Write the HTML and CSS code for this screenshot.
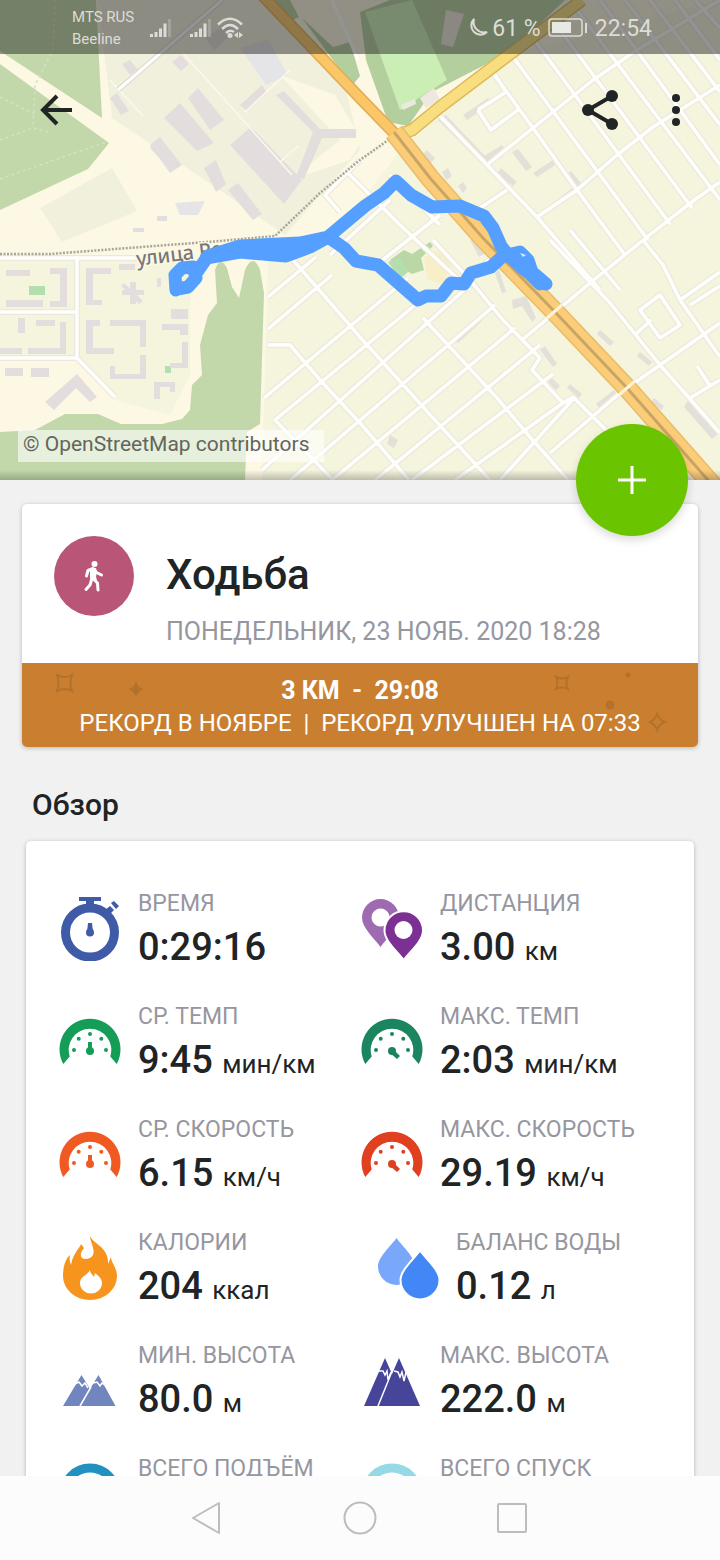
FILE: index.html
```html
<!DOCTYPE html>
<html lang="ru">
<head>
    <meta charset="UTF-8">
    <meta name="viewport" content="width=device-width, initial-scale=1.0">
    <title>Ходьба - Обзор</title>
    <link rel="stylesheet" href="styles.css">
</head>
<body>

    <!-- shared icon shapes -->
    <svg class="symbols" aria-hidden="true">
        <symbol id="gauge" viewBox="0 0 64 64">
            <path d="M5.3 54A30.5 30.5 0 1 1 58.7 54L52.3 46.5A21.3 21.3 0 1 0 11.7 46.5Z"/>
            <circle cx="16" cy="40" r="2"/><circle cx="20.7" cy="28.7" r="2"/><circle cx="32" cy="24" r="2"/>
            <circle cx="43.3" cy="28.7" r="2"/><circle cx="48" cy="40" r="2"/>
        </symbol>
        <symbol id="signal" viewBox="0 0 22 20">
            <path d="M0 16h3v3H0zM4.500 14h3v5h-3zM9 10.500h3V19H9zM13.500 5.500h3V19h-3z"/>
            <path d="M18 1h3v18h-3z" opacity=".3"/>
        </symbol>
    </svg>

    <main class="screen">
        <header class="map">
            <svg class="map-picture" viewBox="0 0 720 480" preserveAspectRatio="xMidYMid slice" role="img" aria-label="Маршрут на карте">
                <rect width="720" height="480" fill="#fdf8e3"/>
                <!-- land use -->
                <path fill="#f0f0dd" d="M98 0H265L345 85 360 150 285 235 205 180 112 118ZM40 208L112 168 137 211 62 242Z"/>
                <path fill="#fdf8e3" d="M280 75l55 20 27 45-12 20-60 20 50-40z"/>
                <path fill="#f5f4dd" d="M0 258H190V375L170 415 115 400 77 360H0ZM405 145L515 55 720 0V480H262L268 260 330 240Z"/>
                <path fill="#c2d8ab" d="M0 0H96L102 118 0 51ZM0 64L109 143 88 169 0 210ZM0 432L35 430 65 414H98L121 424H162L182 419 190 410 192 385 202 375 200 345 208 315 217 303 215 270Q220 255 227 268L232 287 239 298 245 270Q253 252 260 270L264 293 260 424 247 432 245 480H0Z"/>
                <path fill="#b4cf9e" d="M270 0H290L299 17 293 20ZM302 18L333 47 350 42 360 76 352 86ZM390 0H565L510 52 432 92 408 126 388 122 366 60 360 12Z"/>
                <path fill="#cbeeb4" d="M365 12L412 0 447 80 400 110Z"/>
                <path fill="#eee9df" d="M446 10l18 4-11 33-12-3zM401 105l14-6 1 5-13 6zM420 98l14-10 6 12-14 8z"/>
                <path fill="#f8eec8" d="M424 258l14-8 14 14-10 20-14-4z"/>
                <path fill="#bcd7a6" d="M390 260l14-10 8 4 18-12 3 4-12 12 3 12-12 4z"/>
                <path fill="#b2dfad" d="M388 262l12-4 8 14-8 7zM29 286h16v9H29zM165 366h6v7h-6z"/>
                <path fill="none" stroke="#d3e2c0" stroke-width="1.500" stroke-dasharray="3 3" d="M55 0L53 50 35 85 33 128M0 97L34 114M0 140L33 128 52 133M0 179L106 142"/>

                <!-- buildings -->
                <path fill="#e3dedd" d="M164 118l16-15 34 40-17 8zM188 98l10-10 26 32-14 10zM150 145l10-8 22 28-12 8zM230 145l21-18 51 53-18 24zM204 168l12-8 10 24-10 8zM228 190l10-7 24 31-9 6zM276 95l8-4 36 38h36v9h-34l-18 41-8-2 17-45zM240 105l22-20 5 8-20 18zM110 98l7-5 12 18-8 4zM122 64l8-4 8 10-8 5zM172 62l9-7 8 9-8 7zM150 148l6-4 13 15-6 3zM205 38l22-15 8 8-21 19zM157 216h10v5h-10zM133 228h11v4h-11z"/>
                <path fill="#e5e5e7" d="M240 48l28-8 20 35-22 10zM175 203l30-2-7 14h-18z"/>
                <path fill="#e3dedd" d="M6 270h24v6H6zM50 268h17v39H50v-6h10v-27H50zM6 300h37v7H6zM86 268h25v6H93v26h9v5H86zM119 264h16v6h-16zM157 278h4v9h-4zM171 309h17v10h-17zM18 318h7v15h-7zM36 320h19v6H36zM60 322h6v32H28v-6h32zM0 348h22v6H0zM86 320h14v6h-7v22h21v6H86zM110 320h36v27h-6v-21h-30zM110 366h5v8h25v-19h6v24h-36zM162 324h26v11h-8v-5h-18zM182 342h6v26h-18v-5h12zM154 382h21v10h-5v-5h-10v12h-6zM5 368h18v8H5zM31 368h18v9H31zM45 402l32-28 20 23-7 5-14-14-22 22zM122 290h22v5h-22zM130 282h6v22h-6zM124 283l19 18-4 3-18-18z"/>
                <path fill="#e3e0d9" d="M438 120l8-5 40 42-5 6zM484 156l18-11 3 5-18 12zM512 152l6-3 14 18-6 4zM550 205l24-18-8-12 5-4 13 16-31 23zM501 168l16 14-4 4-16-12zM533 173l20-13 2 5-18 12zM421 156l6-6 8 8-6 7zM442 172l6-4 4 8-6 4zM458 186l5-4 4 6-4 5zM463 115l25-17 4 5-25 17zM512 300l14-4 10 22-4 4-10-16-9 3zM540 350l5-4 12 18-4 3zM548 374l12 12-4 4-12-12zM570 384l12 10-3 4-12-10zM596 404l18-14 3 5-17 14zM600 330l14 12-4 4-13-12zM640 352l12 10-3 4-12-10zM688 400l30 34-6 5-28-32zM654 398l10 8-3 4-10-8zM390 435l8 5-4 8-7-4zM454 338l24-22 4 5-24 22zM499 270l7 22-4 1-7-20zM470 240l8-4 6 18-5 3z"/>

                <!-- street grid -->
                <g fill="none" stroke="#ebe9df" stroke-width="6" stroke-linejoin="round">
                    <path id="streets" d="M487 165L533 128 593 80 637 50 720 0M537 217L577 190 617 155 653 127 720 85M522 340L590 283 647 237 697 198 720 182M550 453L620 393 660 365 720 323M438 114L487 165 537 217 600 290M493 73L533 128 577 190 625 255M513 57L648 240M530 34L670 224M551 18L692 208M571 2L720 200M600 0L720 165M625 0L720 125M650 0L720 92M675 0L720 60M695 0L720 28M550 240L610 303 660 365 720 433M643 240L663 265 680 300 720 357M570 230L620 290M640 310L660 295 680 325 660 338ZM636 334L651 320M680 300L720 272M690 305L720 286M697 366L710 386 690 398 720 380M478 110L506 92M478 110L491 130 519 109M506 92L494 73M293 260L360 337 433 418 490 480M268 345H290L320 380 360 423 409 480M275 420L333 480M423 318L460 358 497 398 530 437 568 480M433 240L470 280 503 320 540 358 532 370 563 403 573 397 603 427 640 470M345 170L400 225 470 290M390 175L440 225M268 297L316 257M268 329L332 275M264 398L408 278M275 420L425 297M262 470L470 285M290 480L495 305M332 480L515 328M375 480L540 345M412 480L553 374M455 480L563 403M500 480L575 397M0 312H77M77 256V358L115 397M0 358H77M0 258H140M330 237L375 198M380 262L440 215M462 285L505 245M360 160L325 195 340 212M480 208L507 190M330 255L390 200"/>
                </g>
                <use class="street-fill" href="#streets" fill="none" stroke="#fffefa" stroke-width="3.500"/>
                <path fill="none" stroke="#fbf9ef" stroke-width="1.500" d="M182 52L292 175M245 112L290 70M110 80L143 116M280 162L298 146"/>
                <path fill="none" stroke="#d9d8cd" stroke-width="5" d="M118 90L222 0"/>
                <path fill="none" stroke="#fff" stroke-width="3" d="M118 90L222 0M332 0L358 60"/>
                <!-- railway -->
                <path fill="none" stroke="#a8a69b" stroke-width="2.500" stroke-dasharray="2 1.500" d="M0 254H50L220 241 275 236 320 193 360 160 394 136"/>

                <!-- main roads -->
                <path fill="none" stroke="#dcb95c" stroke-width="13" d="M396 136L412 130 440 107 510 54 582 0"/>
                <path fill="none" stroke="#f8de7f" stroke-width="10" d="M396 136L412 130 440 107 510 54 582 0"/>
                <path fill="none" stroke="#e2ae54" stroke-width="12" d="M262 -5L362 100 397 136"/>
                <path fill="none" stroke="#fac668" stroke-width="9" d="M262 -5L362 100 397 136"/>
                <path fill="none" stroke="#e9bb68" stroke-width="20" d="M394 132L430 178 483 238 555 312 627 388 715 488"/>
                <path fill="none" stroke="#fccd78" stroke-width="17" d="M394 132L430 178 483 238 555 312 627 388 715 488"/>
                <path fill="none" stroke="#c9a565" stroke-width="3" d="M394 132L430 178 483 238 555 312 627 388 715 488"/>
                <path stroke="#fff4d8" stroke-width="3" d="M546 319l16-14M619 395l16-14"/>

                <text class="street-name" transform="translate(137 266) rotate(-7)">улица Ре</text>

                <!-- recorded track -->
                <path class="track" d="M176 290L175 275 182 268 193 267 196 278 188 287 177 289M197 272L208 256 240 246 300 243 328 237 365 206 384 193 396 181 411 195 432 207 460 206 484 216 493 228 501 246 508 255 520 252 528 260 532 272 546 284M206 258L240 252 286 256 310 247 328 237 344 248 356 261 378 265 418 300 426 296 441 296 451 283 464 284 471 273 491 267 506 253 520 266 529 273 540 284"/>
                <path class="track-dot" d="M520 253l6 2-3 2z"/>
            </svg>

            <div class="status-bar">
                <div class="carriers"><span>MTS RUS</span><span>Beeline</span></div>
                <svg class="signal"><use href="#signal"/></svg>
                <svg class="signal signal-second"><use href="#signal"/></svg>
                <svg class="wifi" viewBox="0 0 26 22">
                    <path fill="none" stroke="#dcdcd6" stroke-width="2.500" d="M1 7.500Q13 -4 25 7.500M5 12Q13 4 21 12M9 16Q13 12 17 15"/>
                    <circle cx="13" cy="18.500" r="2.500"/><path d="M17 18l4-3v6zM26 18l-4-3v6z"/>
                </svg>
                <div class="status-right">
                    <svg class="moon" viewBox="0 0 22 22"><path d="M7 2A9 9 0 1 0 20 15 10.500 10.500 0 0 1 7 2Z"/></svg>
                    <span>61 %</span>
                    <svg class="battery" viewBox="0 0 40 20">
                        <rect x="1" y="1" width="33" height="17" rx="3" fill="none" stroke="#dcdcd6" stroke-width="1.500"/>
                        <rect x="4" y="4" width="19" height="11" fill="#e8e8e4"/><rect x="37" y="5" width="2" height="10" fill="#dcdcd6"/>
                    </svg>
                    <span>22:54</span>
                </div>
            </div>

            <div class="toolbar">
                <button class="icon-button" aria-label="Назад">
                    <svg viewBox="0 0 40 40"><path fill="none" stroke="#202425" stroke-width="4" d="M36 20H7M21 6L7 20 21 34"/></svg>
                </button>
                <button class="icon-button push-right" aria-label="Поделиться">
                    <svg viewBox="0 0 40 40"><path fill="none" stroke="#202425" stroke-width="4" d="M32 6L8 20 32 34"/><g fill="#202425"><circle cx="32" cy="6" r="6"/><circle cx="8" cy="20" r="6"/><circle cx="32" cy="34" r="6"/></g></svg>
                </button>
                <button class="icon-button" aria-label="Ещё">
                    <svg viewBox="0 0 40 40"><g fill="#202425"><circle cx="20" cy="8" r="4"/><circle cx="20" cy="20" r="4"/><circle cx="20" cy="32" r="4"/></g></svg>
                </button>
            </div>

            <a class="copyright" href="#">© OpenStreetMap contributors</a>
            <button class="add-button" aria-label="Добавить">
                <svg viewBox="0 0 28 28"><path stroke="#fff" stroke-width="3" d="M14 0v28M0 14h28"/></svg>
            </button>
        </header>

        <section class="workout">
            <div class="workout-head">
                <div class="workout-icon">
                    <svg viewBox="0 0 24 32">
                        <circle cx="12.500" cy="4" r="3" fill="#fff"/>
                        <path fill="none" stroke="#fff" stroke-width="3" stroke-linecap="round" stroke-linejoin="round" d="M4.500 16L6 10.500 11 8.500 14.500 12.500 19.500 15M9.500 20L8 25 4 29.500M10.500 18L15.500 23 16 30"/>
                        <path fill="#fff" d="M8 8h6l1 4-1 5 1 3-7-1z"/>
                    </svg>
                </div>
                <div>
                    <h1>Ходьба</h1>
                    <p class="date">ПОНЕДЕЛЬНИК, 23 НОЯБ. 2020 18:28</p>
                </div>
            </div>
            <div class="record">
                <svg class="sparkles" viewBox="0 0 676 84" preserveAspectRatio="xMidYMid slice" aria-hidden="true">
                    <g fill="none" stroke="#b3722b" stroke-width="2">
                        <path d="M35 12Q43 16 50 12 47 20 50 28 43 24 35 28 38 20 35 12Z"/>
                        <path d="M534 14Q540 17 546 14 543 20 546 26 540 23 534 26 537 20 534 14Z"/>
                        <path d="M635 51Q637 57 643 59 637 61 635 67 633 61 628 59 633 57 635 51Z"/>
                    </g>
                    <g fill="#b3722b">
                        <path d="M114 18Q116 25 122 26 116 28 114 34 112 28 106 26 112 25 114 18Z"/>
                        <circle cx="588" cy="42" r="4.500"/><circle cx="606" cy="12" r="2.500"/>
                    </g>
                </svg>
                <strong>3 КМ &nbsp;-&nbsp; 29:08</strong>
                <span>РЕКОРД В НОЯБРЕ &nbsp;|&nbsp; РЕКОРД УЛУЧШЕН НА 07:33</span>
            </div>
        </section>

        <h2>Обзор</h2>

        <section class="stats">
            <div class="stat">
                <svg class="stat-icon blue" viewBox="0 0 64 64">
                    <circle cx="32" cy="35.500" r="24.500" fill="none" stroke="#3f5ba8" stroke-width="9"/>
                    <path d="M21 0h22v4h-7v6h-8V4h-7zM47 13l5-4 4 4-5 5zM53 6l3-2 5 5-3 3zM30 26h4l1 9h-6z"/><circle cx="32" cy="35.500" r="4"/>
                </svg>
                <div><p class="label">ВРЕМЯ</p><p class="value">0:29:16</p></div>
            </div>
            <div class="stat">
                <svg class="stat-icon" viewBox="0 0 64 64">
                    <path fill="#9e6bb2" fill-rule="evenodd" d="M20.500 50C14 41 2 31 2 20.500A18.500 18.500 0 0 1 39 20.500C39 31 27 41 20.500 50ZM20.500 11.500a9 9 0 1 0 .1 0Z"/>
                    <path fill="#7c3094" stroke="#fff" stroke-width="2" d="M43.700 63C37 54 24.500 44 24.500 33.500A19 19 0 0 1 63 33.500C63 44 50.500 54 43.700 63Z"/>
                    <circle cx="43.500" cy="33" r="9" fill="#fff"/>
                </svg>
                <div><p class="label">ДИСТАНЦИЯ</p><p class="value">3.00 <small>км</small></p></div>
            </div>
            <div class="stat">
                <svg class="stat-icon green" viewBox="0 0 64 64"><use href="#gauge"/><circle cx="32" cy="41" r="4"/><path d="M30 32h4v9h-4z"/></svg>
                <div><p class="label">СР. ТЕМП</p><p class="value">9:45 <small>мин/км</small></p></div>
            </div>
            <div class="stat">
                <svg class="stat-icon teal" viewBox="0 0 64 64"><use href="#gauge"/><circle cx="32" cy="41" r="4"/><path d="M30 43l3-4 7 7-3 3z"/></svg>
                <div><p class="label">МАКС. ТЕМП</p><p class="value">2:03 <small>мин/км</small></p></div>
            </div>
            <div class="stat">
                <svg class="stat-icon orange" viewBox="0 0 64 64"><use href="#gauge"/><circle cx="32" cy="41" r="4"/><path d="M30 32h4v9h-4z"/></svg>
                <div><p class="label">СР. СКОРОСТЬ</p><p class="value">6.15 <small>км/ч</small></p></div>
            </div>
            <div class="stat">
                <svg class="stat-icon red" viewBox="0 0 64 64"><use href="#gauge"/><circle cx="32" cy="41" r="4"/><path d="M30 43l3-4 7 7-3 3z"/></svg>
                <div><p class="label">МАКС. СКОРОСТЬ</p><p class="value">29.19 <small>км/ч</small></p></div>
            </div>
            <div class="stat">
                <svg class="stat-icon" viewBox="0 0 64 64">
                    <path fill="#f7941d" d="M32 0C35 7 46 10 49 20 50 23 50 25 50 28L53 21C53 27 59 31 59 40A27 24 0 0 1 5 40C5 30 8 22 12 19 11 23 12 26 13 29 15 17 22 12 23 8L26 12C21 18 22 23 28 23 34 23 37 18 35 12 34 7 32 4 32 0Z"/>
                    <path fill="#fff" d="M32 34C32 37 34 38 36 41L37 37C41 40 44 43 44 47A11 10.500 0 0 1 22 47C22 40 29 40 32 34Z"/>
                </svg>
                <div><p class="label">КАЛОРИИ</p><p class="value">204 <small>ккал</small></p></div>
            </div>
            <div class="stat stat-inset">
                <svg class="stat-icon" viewBox="0 0 64 64">
                    <path fill="#79a7fa" d="M20.500 2C26 10 39 21 39 30.500A18.500 18.500 0 0 1 2 30.500C2 21 15 10 20.500 2Z"/>
                    <path fill="#4287f5" stroke="#fff" stroke-width="2" d="M44 14.500C50 23 63.500 34 63.500 44A19.500 19.500 0 0 1 24.500 44C24.500 34 38 23 44 14.500Z"/>
                </svg>
                <div><p class="label">БАЛАНС ВОДЫ</p><p class="value">0.12 <small>л</small></p></div>
            </div>
            <div class="stat">
                <svg class="stat-icon" viewBox="0 0 64 64">
                    <path fill="#7186be" d="M5 57L23.500 26 32 40 40.500 26 57.500 57Z"/>
                    <path fill="none" stroke="#fff" stroke-width="1.500" d="M22 57L33 38M17 35l4-2 3 4 3-3 3 5M35 34l4-1 3 4 2-3 4 3"/>
                </svg>
                <div><p class="label">МИН. ВЫСОТА</p><p class="value">80.0 <small>м</small></p></div>
            </div>
            <div class="stat">
                <svg class="stat-icon" viewBox="0 0 64 64">
                    <path fill="#46459a" d="M4 57L25 9 32 25 39 9 60 57Z"/>
                    <path fill="none" stroke="#fff" stroke-width="1.500" d="M18 57L33 20M19 22l4 0 2 4 2-4 1 9 3-8M34 22l4 1 2 5 2-5 2 9 2-9"/>
                </svg>
                <div><p class="label">МАКС. ВЫСОТА</p><p class="value">222.0 <small>м</small></p></div>
            </div>
            <div class="stat">
                <svg class="stat-icon" viewBox="0 0 64 64"><circle cx="32" cy="32" r="26" fill="none" stroke="#2191c0" stroke-width="9"/></svg>
                <div><p class="label">ВСЕГО ПОДЪЁМ</p></div>
            </div>
            <div class="stat">
                <svg class="stat-icon" viewBox="0 0 64 64"><circle cx="32" cy="32" r="26" fill="none" stroke="#95d8e6" stroke-width="9"/></svg>
                <div><p class="label">ВСЕГО СПУСК</p></div>
            </div>
        </section>
    </main>

    <nav class="system-nav">
        <button aria-label="Назад"><svg viewBox="0 0 36 36"><path d="M29 3V33L3 18Z"/></svg></button>
        <button aria-label="Домой"><svg viewBox="0 0 36 36"><circle cx="18" cy="18" r="15.500"/></svg></button>
        <button aria-label="Недавние"><svg viewBox="0 0 36 36"><rect x="4" y="4" width="28" height="28" rx="1"/></svg></button>
    </nav>

</body>
</html>
```
FILE: styles.css
```css
* { box-sizing: border-box; }

body {
    margin: 0;
    height: 100vh;
    display: flex;
    flex-direction: column;
    font-family: Roboto, "Noto Sans", sans-serif;
    color: #202425;
    background-color: #f1f1f1;
}

h1, h2, p { margin: 0; }
button { padding: 0; border: none; background: none; cursor: pointer; }
svg { display: block; }

.symbols { position: absolute; width: 0; height: 0; }

.screen { flex: 1; min-height: 0; overflow-y: auto; scrollbar-width: none; }

/* map */
.map { position: relative; aspect-ratio: 3 / 2; }
.map-picture { width: 100%; height: 100%; }
.map::after {
    content: "";
    position: absolute;
    left: 0; right: 0; bottom: 0;
    height: 10px;
    background: linear-gradient(transparent, rgba(60, 60, 50, 0.3));
}
.street-fill { stroke-linejoin: round; }
.street-name { font: 500 20px "Noto Sans", sans-serif; fill: #77777a; stroke: #fdf8e3; stroke-width: 3px; paint-order: stroke; }
.track { fill: none; stroke: #549fff; stroke-width: 13px; stroke-linecap: round; stroke-linejoin: round; }
.track-dot { fill: #dcebff; }

.status-bar {
    position: absolute;
    top: 0; left: 0; right: 0;
    height: 54px;
    padding: 2px 68px 0 72px;
    display: flex;
    align-items: center;
    color: #dcdcd6;
    fill: #dcdcd6;
    background-color: rgba(40, 40, 40, 0.5);
}
.carriers { display: flex; flex-direction: column; width: 78px; font-size: 15px; line-height: 22px; }
.signal { width: 22px; height: 20px; }
.signal-second { margin-left: 18px; }
.wifi { width: 26px; height: 22px; margin-left: 5px; }
.status-right { margin-left: auto; display: flex; align-items: center; font-size: 23px; gap: 7px; }
.moon { width: 22px; height: 22px; margin-right: -4px; fill: none; stroke: #dcdcd6; stroke-width: 2px; }
.battery { width: 40px; height: 20px; }

.toolbar {
    position: absolute;
    top: 54px; left: 0; right: 0;
    height: 112px;
    padding: 0 24px 0 36px;
    display: flex;
    align-items: center;
    gap: 36px;
}
.icon-button, .icon-button svg { width: 40px; height: 40px; }
.push-right { margin-left: auto; }

.copyright {
    position: absolute;
    left: 18px; bottom: 18px;
    padding: 0 15px 4px 5px;
    font-size: 21px;
    line-height: 28px;
    color: #62665c;
    text-decoration: none;
    background-color: rgba(255, 255, 255, 0.6);
}

.add-button {
    position: absolute;
    right: 32px; bottom: -56px;
    z-index: 2;
    width: 112px;
    height: 112px;
    display: grid;
    place-items: center;
    border-radius: 50%;
    background-color: #6bc400;
    box-shadow: 0 4px 10px rgba(0, 0, 0, 0.15);
}
.add-button svg { width: 28px; height: 28px; }

/* workout card */
.workout {
    margin: 24px 22px 0;
    border-radius: 5px;
    overflow: hidden;
    background-color: white;
    box-shadow: 0 1px 4px rgba(0, 0, 0, 0.25);
}
.workout-head { display: flex; gap: 32px; padding: 32px 32px 13px; }
.workout-icon {
    width: 80px;
    height: 80px;
    display: grid;
    place-items: center;
    border-radius: 50%;
    background-color: #b95677;
}
.workout-icon svg { width: 24px; height: 32px; }
h1 { font-size: 42px; font-weight: 500; line-height: 78px; }
.date { font-size: 25px; line-height: 36px; color: #9696a0; }

.record {
    position: relative;
    display: flex;
    flex-direction: column;
    align-items: center;
    padding: 12px 0 8px;
    font-size: 24px;
    line-height: 32px;
    color: white;
    background-color: #ca7f30;
}
.record strong, .record span { position: relative; }
.record strong { font-size: 25px; font-weight: 700; }
.sparkles { position: absolute; inset: 0; width: 100%; height: 100%; }

h2 { margin: 40px 32px 18px; font-size: 30px; font-weight: 500; line-height: 36px; }

/* overview */
.stats {
    margin: 0 26px 24px;
    padding: 50px 32px;
    display: grid;
    grid-template-columns: 1fr 1fr;
    row-gap: 32px;
    border-radius: 5px;
    background-color: white;
    box-shadow: 0 1px 4px rgba(0, 0, 0, 0.25);
}
.stat { display: flex; gap: 16px; height: 81px; white-space: nowrap; }
.stat-inset { padding-left: 16px; }
.stat-icon { width: 64px; height: 64px; margin-top: 6px; flex: none; }
.label { font-size: 23px; line-height: 26px; color: #9696a0; }
.value { font-size: 38px; font-weight: 500; line-height: 60px; }
.value small { font-size: 26px; font-weight: 400; }

.blue { fill: #3f5ba8; }
.green { fill: #159c57; }
.teal { fill: #1b8560; }
.orange { fill: #f05a22; }
.red { fill: #e0401f; }

.system-nav {
    height: 84px;
    display: flex;
    justify-content: center;
    gap: 116px;
    background-color: #fcfcfc;
}
.system-nav svg { width: 36px; height: 36px; fill: none; stroke: #bdbdbd; stroke-width: 2px; stroke-linejoin: round; }
```
